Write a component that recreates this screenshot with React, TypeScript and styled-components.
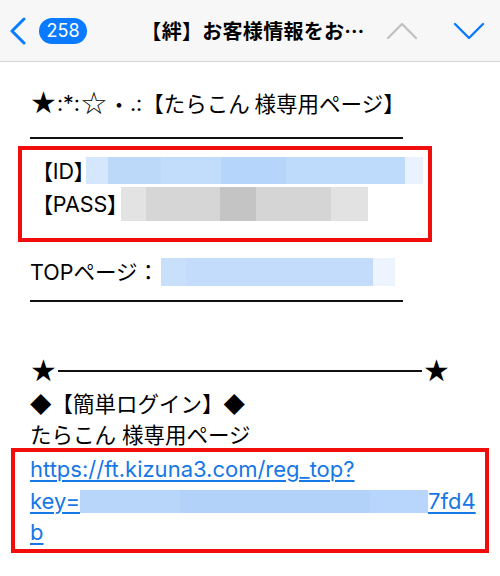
import React from "react";
import styled, { createGlobalStyle } from "styled-components";

const Global = createGlobalStyle`
  html, body { margin: 0; padding: 0; background: #fff; }
  body { width: 500px; height: 576px; overflow: hidden; }
`;

const JP = `Inter, "Noto Sans CJK JP", "Noto Sans", sans-serif`;
const CJK = `"Noto Sans CJK JP", sans-serif`;

const Page = styled.div`
  width: 500px;
  height: 576px;
  background: #fff;
  font-family: ${JP};
  color: #000;
`;

const Header = styled.header`
  height: 61px;
  background: #f7f7f7;
  border-bottom: 1px solid #d4d4d4;
  display: grid;
  grid-template-columns: 1fr auto 1fr;
  align-items: center;
  padding: 0 4px 0 10px;
`;

const HeaderLeft = styled.div`
  display: flex;
  align-items: center;
  gap: 13px;
`;

const HeaderRight = styled.div`
  display: flex;
  align-items: center;
  justify-content: flex-end;
  gap: 35px;
  padding-right: 11px;
`;

const Badge = styled.span`
  display: inline-flex;
  align-items: center;
  justify-content: center;
  height: 26px;
  width: 48px;
  border-radius: 13px;
  background: #0a7aff;
  color: #fff;
  font-family: Inter, "Liberation Sans", sans-serif;
  font-size: 18px;
  font-weight: 400;
`;

const Title = styled.div`
  font-family: ${CJK};
  font-weight: 700;
  font-size: 20px;
  letter-spacing: 0.3px;
  white-space: nowrap;
`;

const Content = styled.main`
  padding: 25px 0 0 30px;
  display: flex;
  flex-direction: column;
  align-items: flex-start;
`;

const Line = styled.div<{ $mt?: number; $h?: number }>`
  font-size: 21.5px;
  line-height: 32px;
  height: ${(p) => p.$h ?? 32}px;
  white-space: nowrap;
  margin-top: ${(p) => p.$mt ?? 0}px;
  display: flex;
  align-items: center;
`;

const Sym = styled.span<{ $size?: number; $palt?: boolean }>`
  font-family: ${CJK};
  font-size: ${(p) => p.$size ?? 22}px;
  font-feature-settings: ${(p) => (p.$palt ? '"palt"' : "normal")};
`;

const Star = styled.span<{ $size?: number }>`
  font-family: "DejaVu Sans", sans-serif;
  font-size: ${(p) => p.$size ?? 30}px;
  line-height: 1;
  display: inline-flex;
  align-items: center;
`;

const Rule = styled.div<{ $mt: number }>`
  width: 373px;
  height: 2px;
  background: #111;
  margin-top: ${(p) => p.$mt}px;
`;

const RedBox = styled.div<{ $mt: number; $ml: number; $w: number; $pt: number; $pb: number; $pl: number }>`
  box-sizing: border-box;
  border: 4px solid #f20d0d;
  margin-top: ${(p) => p.$mt}px;
  margin-left: ${(p) => p.$ml}px;
  width: ${(p) => p.$w}px;
  padding: ${(p) => p.$pt}px 0 ${(p) => p.$pb}px ${(p) => p.$pl}px;
  display: flex;
  flex-direction: column;
`;

const Blur = styled.span<{ $w: number; $h: number; $ml: number; $bg: string }>`
  display: inline-block;
  flex: none;
  width: ${(p) => p.$w}px;
  height: ${(p) => p.$h}px;
  margin-left: ${(p) => p.$ml}px;
  background: ${(p) => p.$bg};
`;

const StarLine = styled.div`
  margin-top: 53px;
  width: 420px;
  height: 32px;
  display: flex;
  align-items: center;
`;

const StarRule = styled.span`
  flex: 1;
  height: 2.5px;
  background: #111;
  margin: 0 1px;
`;

const LinkLine = styled.div`
  font-family: Inter, "Liberation Sans", sans-serif;
  font-size: 22px;
  line-height: 31.5px;
  height: 31.5px;
  color: #1677e6;
  white-space: nowrap;
  display: flex;
  align-items: center;
`;

const LinkText = styled.span`
  text-decoration: underline;
  text-decoration-thickness: 1.5px;
  text-underline-offset: 3px;
`;

const Chevron = ({ d, color, w, h, sw }: { d: string; color: string; w: number; h: number; sw: number }) => (
  <svg width={w} height={h} viewBox={`0 0 ${w} ${h}`} fill="none">
    <path d={d} stroke={color} strokeWidth={sw} strokeLinecap="round" strokeLinejoin="round" />
  </svg>
);

const idBg =
  "linear-gradient(90deg, #d4e7fc 0 22px, #bcd9fa 22px 75px, #c2dcfb 75px 135px, #b6d5fa 135px 200px, #bfdbfb 200px 319px, #e9f2fe 319px 337px)";
const passBg =
  "linear-gradient(90deg, #e3e3e3 0 25px, #d6d6d6 25px 99px, #c4c4c4 99px 135px, #d5d5d5 135px 210px, #e2e2e2 210px 247px)";
const topBg =
  "linear-gradient(90deg, #c9e0fb 0 25px, #c3dcfb 25px 212px, #edf4fe 212px 234px)";
const keyBg =
  "linear-gradient(90deg, #b8d5fa 0 100px, #b3d2fa 100px 290px, #b8d6fb 290px 352px)";

export default function App() {
  return (
    <Page>
      <Global />
      <Header>
        <HeaderLeft>
          <Chevron w={16} h={28} sw={3} color="#0a7aff" d="M14 2 L2 14 L14 26" />
          <Badge>258</Badge>
        </HeaderLeft>
        <Title>【絆】お客様情報をお…</Title>
        <HeaderRight>
          <Chevron w={32} h={18} sw={2.4} color="#c2c2c2" d="M2 16 L16 2 L30 16" />
          <Chevron w={32} h={18} sw={2.4} color="#0a7aff" d="M2 2 L16 16 L30 2" />
        </HeaderRight>
      </Header>
      <Content>
        <Line>
          <Star>★</Star>:*:<Star $size={31}>☆</Star>
          <Sym>・</Sym>.:<Sym $size={21.5}>【たらこん 様専用ページ】</Sym>
        </Line>
        <Rule $mt={18} />
        <RedBox $mt={7} $ml={-12} $w={414} $pt={4} $pb={18} $pl={20}>
          <Line $h={33}>
            <Sym $size={21.5} $palt>【</Sym>ID
            <Sym $size={21.5} $palt>】</Sym>
            <Blur $w={337} $h={27} $ml={1} $bg={idBg} />
          </Line>
          <Line $h={33}>
            <Sym $size={21.5} $palt>【</Sym>PASS
            <Sym $size={21.5} $palt>】</Sym>
            <Blur $w={247} $h={34} $ml={3} $bg={passBg} />
          </Line>
        </RedBox>
        <Line $mt={14}>
          TOPページ：
          <Blur $w={234} $h={28} $ml={2} $bg={topBg} />
        </Line>
        <Rule $mt={12} />
        <StarLine>
          <Star>★</Star>
          <StarRule />
          <Star>★</Star>
        </StarLine>
        <Line>
          <Sym $size={21.5}>◆【簡単ログイン】◆</Sym>
        </Line>
        <Line>たらこん 様専用ページ</Line>
        <RedBox $mt={-3} $ml={-19} $w={478} $pt={2} $pb={0} $pl={15}>
          <LinkLine>
            <LinkText>https://ft.kizuna3.com/reg_top?</LinkText>
          </LinkLine>
          <LinkLine>
            <LinkText>key=</LinkText>
            <Blur $w={348} $h={23} $ml={0} $bg={keyBg} />
            <LinkText>7fd4</LinkText>
          </LinkLine>
          <LinkLine>
            <LinkText>b</LinkText>
          </LinkLine>
        </RedBox>
      </Content>
    </Page>
  );
}
